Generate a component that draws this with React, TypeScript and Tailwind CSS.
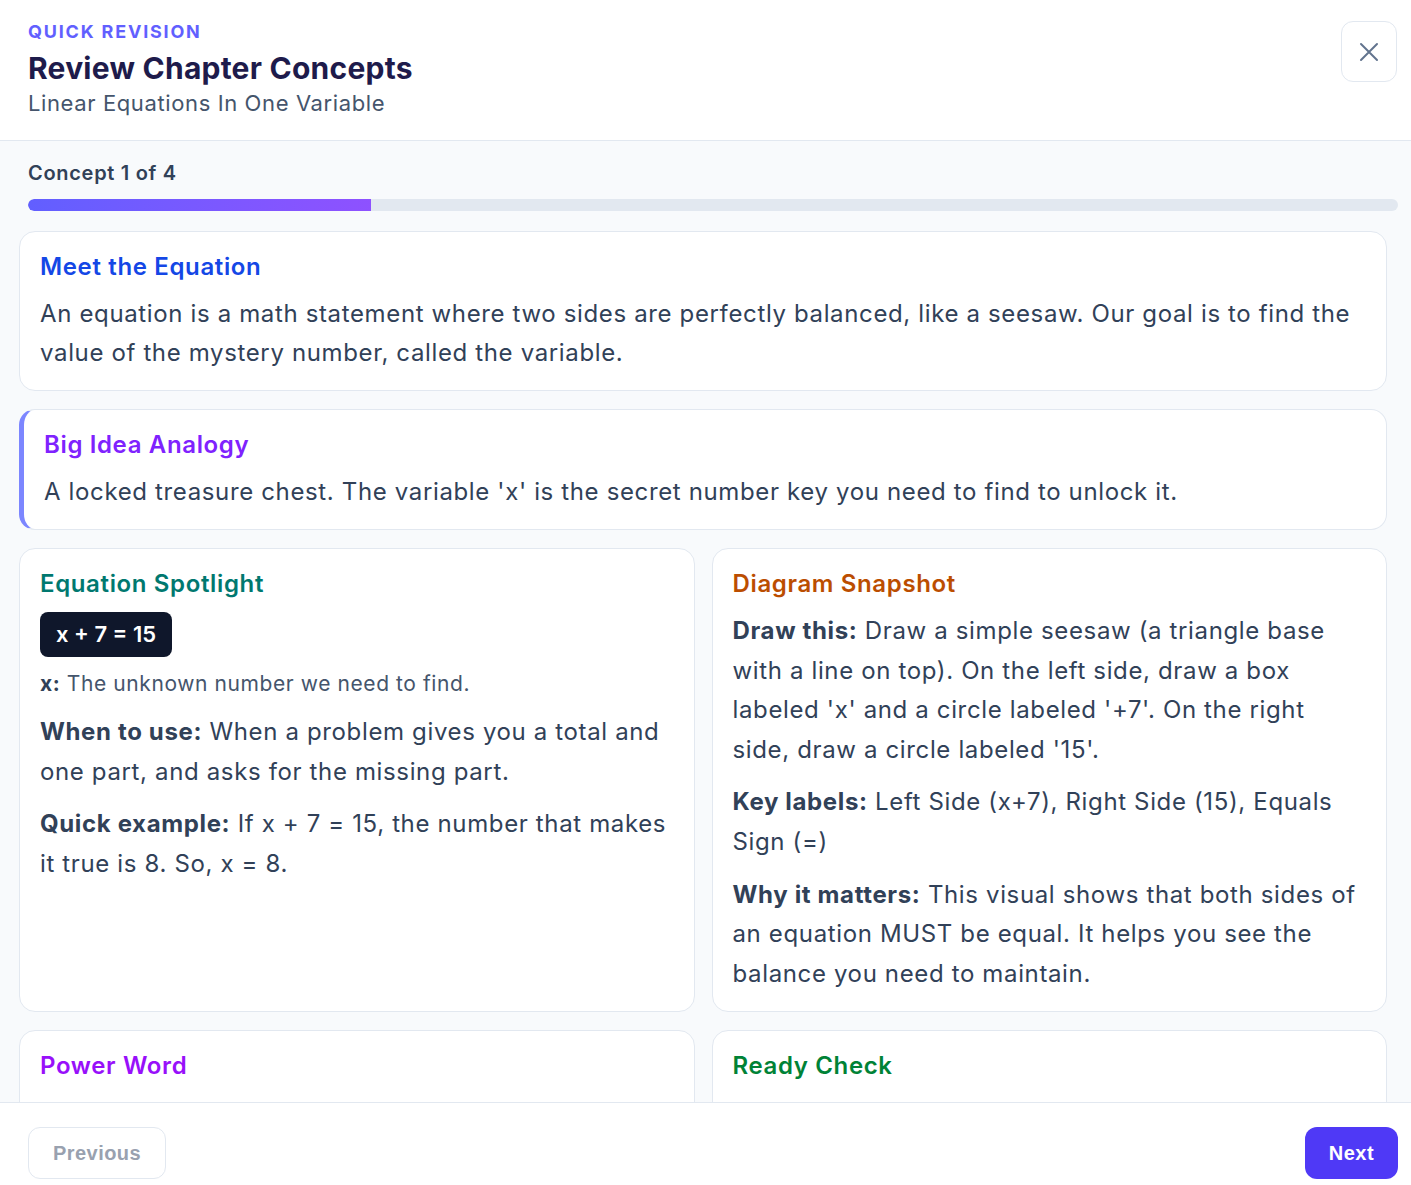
import React from "react";

const totalConcepts = 4;

function Card({
  children,
  className = "",
}: {
  children: React.ReactNode;
  className?: string;
}) {
  return (
    <div
      className={`bg-white border border-slate-200 rounded-2xl px-5 pt-[21px] pb-[18px] ${className}`}
    >
      {children}
    </div>
  );
}

export default function App() {
  const progress = 25;

  return (
    <div className="h-screen flex flex-col bg-white font-['Inter',sans-serif] tracking-[0.04em] overflow-hidden">
      {/* Header */}
      <header className="flex justify-between items-start pl-7 pr-[14px] pt-5 pb-[22px] border-b border-slate-200">
        <div>
          <p className="text-[18px] leading-6 font-bold tracking-[0.1em] uppercase text-indigo-500">
            Quick Revision
          </p>
          <h1 className="mt-1.5 text-[30px] leading-9 font-bold tracking-[0.008em] text-[#1e1b4b]">
            Review Chapter Concepts
          </h1>
          <p className="mt-0.5 text-[22px] leading-[30px] tracking-[0.028em] text-slate-600">
            Linear Equations In One Variable
          </p>
        </div>
        <button className="mt-[1px] w-14 h-[61px] flex items-center justify-center rounded-xl border border-slate-200 bg-white text-slate-500">
          <svg width="20" height="20" viewBox="0 0 20 20" fill="none">
            <path
              d="M2 2 L18 18 M18 2 L2 18"
              stroke="currentColor"
              strokeWidth="2"
              strokeLinecap="round"
            />
          </svg>
        </button>
      </header>

      {/* Content */}
      <main className="flex-1 min-h-0 overflow-hidden bg-slate-50">
        <div className="pl-7 pr-[13px] pt-[18px]">
          <p className="text-[20px] leading-7 font-semibold tracking-[0.035em] text-slate-700">
            Concept 1 of {totalConcepts}
          </p>
          <div className="mt-3 h-3 rounded-full bg-slate-200 overflow-hidden">
            <div
              className="h-full rounded-l-full bg-gradient-to-r from-indigo-500 to-violet-500"
              style={{ width: `${progress}%` }}
            />
          </div>
        </div>

        <div className="pl-[19px] pr-[24px] pt-5 flex flex-col gap-[18px] text-slate-700">
          <Card>
            <h2 className="text-2xl leading-7 font-semibold text-blue-700">
              Meet the Equation
            </h2>
            <p className="mt-[13px] text-2xl leading-[39px]">
              An equation is a math statement where two sides are perfectly
              balanced, like a seesaw. Our goal is to find the value of the
              mystery number, called the variable.
            </p>
          </Card>

          <Card className="border-l-[5px] border-l-indigo-400">
            <h2 className="text-2xl leading-7 font-semibold text-violet-600">
              Big Idea Analogy
            </h2>
            <p className="mt-[13px] text-2xl leading-[39px]">
              A locked treasure chest. The variable 'x' is the secret number
              key you need to find to unlock it.
            </p>
          </Card>

          <div className="grid grid-cols-2 gap-[17px]">
            <Card>
              <h2 className="text-2xl leading-7 font-semibold text-teal-700">
                Equation Spotlight
              </h2>
              <div className="mt-[14px] inline-block rounded-lg bg-slate-900 px-4 h-[45px] leading-[45px] text-[22px] font-semibold tracking-normal text-white">
                x + 7 = 15
              </div>
              <p className="mt-[13px] text-[21px] leading-7 tracking-[0.028em] text-slate-600">
                <span className="font-bold text-slate-700">x:</span> The
                unknown number we need to find.
              </p>
              <p className="mt-[14px] text-2xl leading-10">
                <span className="font-bold">When to use:</span> When a problem
                gives you a total and one part, and asks for the missing part.
              </p>
              <p className="mt-3 text-2xl leading-10">
                <span className="font-bold">Quick example:</span> If x + 7 =
                15, the number that makes it true is 8. So, x = 8.
              </p>
            </Card>

            <Card>
              <h2 className="text-2xl leading-7 font-semibold text-amber-700">
                Diagram Snapshot
              </h2>
              <p className="mt-[13px] text-2xl leading-[39.6px]">
                <span className="font-bold">Draw this:</span> Draw a simple
                seesaw (a triangle base with a line on top). On the left side,
                draw a box labeled 'x' and a circle labeled '+7'. On the right
                side, draw a circle labeled '15'.
              </p>
              <p className="mt-[13px] text-2xl leading-[39.6px]">
                <span className="font-bold">Key labels:</span> Left Side (x+7),
                Right Side (15), Equals Sign (=)
              </p>
              <p className="mt-[13px] text-2xl leading-[39.6px]">
                <span className="font-bold">Why it matters:</span> This visual
                shows that both sides of an equation MUST be equal. It helps
                you see the balance you need to maintain.
              </p>
            </Card>
          </div>

          <div className="grid grid-cols-2 gap-[17px]">
            <Card>
              <h2 className="text-2xl leading-7 font-semibold text-purple-600">
                Power Word
              </h2>
              <p className="mt-4 text-2xl leading-[39px]">
                an unknown value, written as a letter like x or y.
              </p>
            </Card>
            <Card>
              <h2 className="text-2xl leading-7 font-semibold text-green-700">
                Ready Check
              </h2>
              <p className="mt-4 text-2xl leading-[39px]">
                can you explain why both sides must stay equal?
              </p>
            </Card>
          </div>
        </div>
      </main>

      {/* Footer */}
      <footer className="flex justify-between items-start pl-7 pr-[13px] pt-6 pb-[6px] border-t border-slate-200 bg-white font-['Liberation_Sans',Arial,sans-serif] tracking-[0.028em]">
        <button className="h-[52px] px-6 rounded-xl border border-slate-200 bg-white text-[20px] font-bold text-gray-400">
          Previous
        </button>
        <button className="h-[52px] px-6 rounded-xl bg-indigo-600 text-[20px] font-bold text-white">
          Next
        </button>
      </footer>
    </div>
  );
}
